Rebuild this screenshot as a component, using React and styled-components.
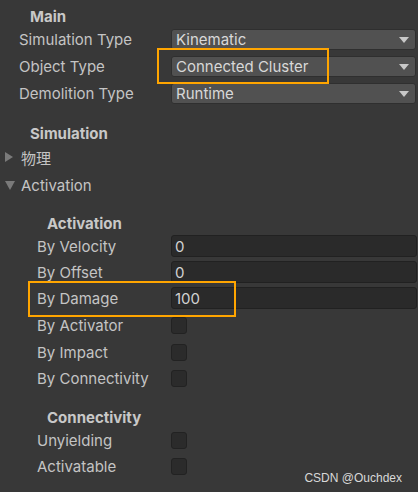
import styled, { createGlobalStyle } from "styled-components"

const GlobalStyle = createGlobalStyle`
    html, body {
        margin: 0;
        padding: 0;
        background: #383838;
    }
    body {
        font-family: Inter, "Noto Sans", "Noto Sans CJK SC", sans-serif;
        color: #c4c4c4;
    }
`

const Inspector = styled.div`
    position: relative;
    width: 418px;
    height: 492px;
    box-sizing: border-box;
    padding: 6px 2px 0 0;
    display: flex;
    flex-direction: column;
    background: #383838;
    overflow: hidden;
`

const Header = styled.div`
    height: 20px;
    display: flex;
    align-items: center;
    padding-left: ${({ indent }) => indent}px;
    margin-top: ${({ top }) => top || 0}px;
    font-size: 15px;
    font-weight: 700;
    color: #c8c8c8;
`

const Row = styled.div`
    height: ${({ h }) => h}px;
    display: grid;
    grid-template-columns: 171px 1fr;
    align-items: center;
`

const Label = styled.div`
    padding-left: ${({ indent }) => indent}px;
    font-size: 15px;
    white-space: nowrap;
`

const Dropdown = styled.div`
    height: 21px;
    box-sizing: border-box;
    border: 1px solid #2f2f2f;
    border-radius: 3px;
    background: #515151;
    display: flex;
    align-items: center;
    justify-content: space-between;
    padding: 0 6px 0 4px;
    font-size: 15px;
    color: #d8d8d8;
`

const Arrow = styled.span`
    width: 0;
    height: 0;
    border-left: 5px solid transparent;
    border-right: 5px solid transparent;
    border-top: 6px solid #c8c8c8;
`

const Field = styled.div`
    height: 22px;
    box-sizing: border-box;
    border: 1px solid #212121;
    border-radius: 3px;
    background: #2a2a2a;
    display: flex;
    align-items: center;
    padding-left: 3px;
    font-size: 15px;
    color: #d2d2d2;
    margin-right: -1px;
`

const Check = styled.div`
    width: 16px;
    height: 17px;
    box-sizing: border-box;
    border: 1px solid #222222;
    border-radius: 3px;
    background: #2b2b2b;
    margin-top: ${({ shift }) => shift || 0}px;
`

const Foldout = styled.div`
    height: 28px;
    display: flex;
    align-items: center;
    font-size: 15px;
    gap: 6px;
    padding-left: 5px;
`

const Tri = styled.span`
    width: 0;
    height: 0;
    ${({ open }) =>
        open
            ? `border-left: 5px solid transparent;
               border-right: 5px solid transparent;
               border-top: 9px solid #7a7a7a;`
            : `border-top: 5px solid transparent;
               border-bottom: 5px solid transparent;
               border-left: 8px solid #7a7a7a;
               margin-right: 2px;`}
`

const Highlight = styled.div`
    position: absolute;
    left: ${({ x }) => x}px;
    top: ${({ y }) => y}px;
    width: ${({ w }) => w}px;
    height: ${({ h }) => h}px;
    box-sizing: border-box;
    border: 2px solid #ffa500;
    pointer-events: none;
`

const Watermark = styled.div`
    position: absolute;
    right: 16px;
    bottom: 7px;
    font-family: "Liberation Sans", Arial, sans-serif;
    font-size: 12px;
    color: #d8d8d8;
`

const mainRows = [
    ["Simulation Type", "Kinematic"],
    ["Object Type", "Connected Cluster"],
    ["Demolition Type", "Runtime"],
]

const activationRows = [
    ["By Velocity", "0"],
    ["By Offset", "0"],
    ["By Damage", "100"],
    ["By Activator"],
    ["By Impact"],
    ["By Connectivity"],
]

const App = () => {
    return (
        <>
            <GlobalStyle />
            <Inspector>
                <Header indent={30}>Main</Header>
                {mainRows.map(([label, value]) => (
                    <Row h={27} key={label}>
                        <Label indent={19}>{label}</Label>
                        <Dropdown>
                            {value}
                            <Arrow />
                        </Dropdown>
                    </Row>
                ))}

                <Header indent={30} top={16}>
                    Simulation
                </Header>
                <Foldout>
                    <Tri />
                    物理
                </Foldout>
                <Foldout>
                    <Tri open />
                    Activation
                </Foldout>

                <Header indent={47} top={14}>
                    Activation
                </Header>
                {activationRows.map(([label, value], i) => (
                    <Row h={i === 3 ? 28 : 26} key={label}>
                        <Label indent={37}>{label}</Label>
                        {value !== undefined ? <Field>{value}</Field> : <Check shift={1} />}
                    </Row>
                ))}

                <Header indent={47} top={16}>
                    Connectivity
                </Header>
                <Row h={26}>
                    <Label indent={37}>Unyielding</Label>
                    <Check />
                </Row>
                <Row h={26}>
                    <Label indent={37}>Activatable</Label>
                    <Check />
                </Row>

                <Highlight x={157} y={48} w={172} h={36} />
                <Highlight x={28} y={281} w={208} h={36} />
                <Watermark>CSDN @Ouchdex</Watermark>
            </Inspector>
        </>
    )
}

export default App
